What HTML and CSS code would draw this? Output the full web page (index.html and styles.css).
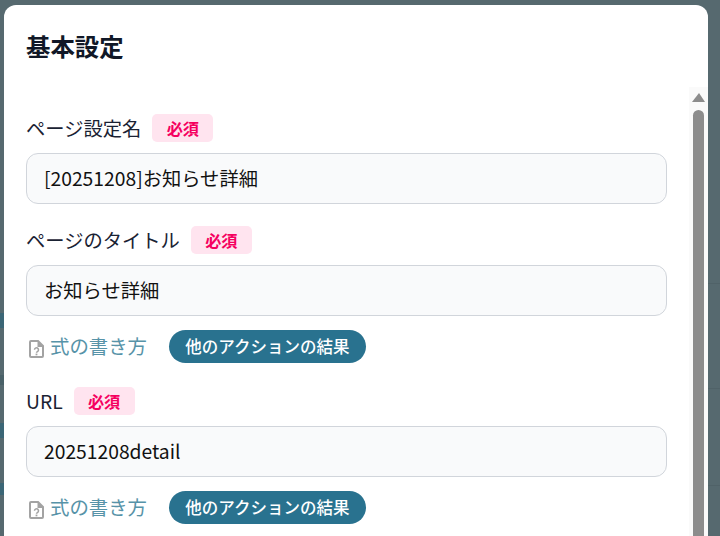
FILE: index.html
```html
<!DOCTYPE html>
<html>
<head>
    <meta charset="UTF-8">
    <meta name="viewport" content="width=device-width, initial-scale=1.0">
    <title>基本設定</title>
    <link rel="stylesheet" href="styles.css">
</head>
<body>
    <!-- ダイアログの裏に透けて見える部分 -->
    <div class="backdrop">
        <span class="mark mark_a"></span>
        <span class="mark mark_b"></span>
        <span class="mark mark_c"></span>
        <span class="mark mark_d"></span>
        <span class="rule rule_a"></span>
        <span class="rule rule_b"></span>
        <span class="rule rule_c"></span>
    </div>
    <div class="modal">
        <h2 class="modal_title">基本設定</h2>
        <div class="modal_body">
            <div class="fields">
                <div class="field">
                    <div class="field_label">ページ設定名<span class="required">必須</span></div>
                    <input class="field_input" type="text" value="[20251208]お知らせ詳細">
                </div>
                <div class="field">
                    <div class="field_label">ページのタイトル<span class="required">必須</span></div>
                    <input class="field_input" type="text" value="お知らせ詳細">
                    <div class="field_tools">
                        <a class="help_link">
                            <svg class="help_icon" viewBox="0 0 15 18"><path fill-rule="evenodd" fill="#a3a3a3" d="M2 0h7.5L15 5.5V16a2 2 0 0 1-2 2H2a2 2 0 0 1-2-2V2a2 2 0 0 1 2-2Zm0 2v14h11V7H8.500V2Z"/><path fill="none" stroke="#a3a3a3" stroke-width="1.5" d="M5.500 9.800a2 2 0 1 1 3.200 1.600c-.8.500-1.200.800-1.200 1.300"/><rect x="6.600" y="13.600" width="1.800" height="1.700" fill="#a3a3a3"/></svg>
                            式の書き方
                        </a>
                        <button class="pill_btn" type="button">他のアクションの結果</button>
                    </div>
                </div>
                <div class="field">
                    <div class="field_label">URL<span class="required">必須</span></div>
                    <input class="field_input" type="text" value="20251208detail">
                    <div class="field_tools">
                        <a class="help_link">
                            <svg class="help_icon" viewBox="0 0 15 18"><path fill-rule="evenodd" fill="#a3a3a3" d="M2 0h7.5L15 5.5V16a2 2 0 0 1-2 2H2a2 2 0 0 1-2-2V2a2 2 0 0 1 2-2Zm0 2v14h11V7H8.500V2Z"/><path fill="none" stroke="#a3a3a3" stroke-width="1.5" d="M5.500 9.800a2 2 0 1 1 3.200 1.600c-.8.500-1.200.800-1.200 1.300"/><rect x="6.600" y="13.600" width="1.800" height="1.700" fill="#a3a3a3"/></svg>
                            式の書き方
                        </a>
                        <button class="pill_btn" type="button">他のアクションの結果</button>
                    </div>
                </div>
            </div>
            <div class="scrollbar">
                <div class="scroll_up"></div>
                <div class="scroll_thumb"></div>
            </div>
        </div>
    </div>
</body>
</html>
```

FILE: styles.css
```css
html,
body {
    height: 100%;
    margin: 0;
    padding: 0;
}

body {
    overflow: hidden;
    background: #56696f;
    font-family: "Noto Sans CJK JP", "Noto Sans", sans-serif;
    color: #111827;
}

.backdrop span {
    position: absolute;
}

.mark {
    left: 0;
    width: 4px;
    background: #3b6676;
}

.mark_a {
    top: 313px;
    height: 15px;
}

.mark_b {
    top: 375px;
    height: 10px;
    background: #4a6168;
}

.mark_c {
    top: 423px;
    height: 15px;
}

.mark_d {
    top: 483px;
    height: 12px;
}

.rule {
    left: 708px;
    width: 12px;
    height: 1px;
    background: #506268;
}

.rule_a {
    top: 283px;
}

.rule_b {
    top: 388px;
}

.rule_c {
    top: 485px;
}

.modal {
    position: relative;
    height: 531px;
    margin: 5px 12px 0 4px;
    background: #fff;
    border-radius: 12px 12px 0 0;
    display: flex;
    flex-direction: column;
    overflow: hidden;
}

.modal_title {
    margin: 0;
    padding: 23px 22px 0;
    height: 61px;
    font-size: 24.4px;
    line-height: 36px;
    font-weight: 700;
    box-sizing: border-box;
    color: #111827;
}

.modal_body {
    flex: 1;
    display: flex;
    min-height: 0;
}

.fields {
    flex: 1;
    padding: 48px 22px 0 22px;
    display: flex;
    flex-direction: column;
    gap: 22px;
}

.field_label {
    display: flex;
    align-items: center;
    font-size: 19.3px;
    line-height: 28px;
    height: 28px;
    margin-bottom: 11px;
    color: #1a2233;
}

.required {
    margin-left: 11px;
    width: 61px;
    height: 28px;
    border-radius: 5px;
    background: #ffe4ef;
    color: #f5005f;
    font-size: 16.2px;
    font-weight: 700;
    text-align: center;
}

.field_input {
    display: block;
    width: 100%;
    height: 51px;
    box-sizing: border-box;
    padding: 0 17px 2px;
    border: 1px solid #d1d5db;
    border-radius: 12px;
    background: #f9fafb;
    font: 19.3px "Noto Sans CJK JP", sans-serif;
    color: #111111;
}

.field_tools {
    display: flex;
    align-items: center;
    margin: 14px 0 2px;
    height: 33px;
}

.help_link {
    display: flex;
    align-items: center;
    gap: 6px;
    padding: 0 0 2px 3px;
    font-size: 19.4px;
    color: #5793a8;
}

.help_icon {
    width: 15px;
    height: 18px;
    margin-top: 6px;
}

.pill_btn {
    margin-left: 22px;
    height: 33px;
    width: 197px;
    padding: 0 0 2px;
    border: 0;
    border-radius: 17px;
    background: #29728f;
    color: #fff;
    font: 500 16.5px "Noto Sans CJK JP", sans-serif;
}

.scrollbar {
    width: 19px;
    background: #fafafa;
    display: flex;
    flex-direction: column;
    align-items: center;
    margin-top: 21px;
    flex: none;
}

.scroll_up {
    width: 0;
    height: 0;
    margin-top: 6px;
    border-left: 7px solid transparent;
    border-right: 6px solid transparent;
    border-bottom: 9px solid #8c8c8c;
}

.scroll_thumb {
    flex: 1;
    width: 11px;
    margin-top: 8px;
    background: #8c8c8c;
    border-radius: 6px 6px 0 0;
}
```
